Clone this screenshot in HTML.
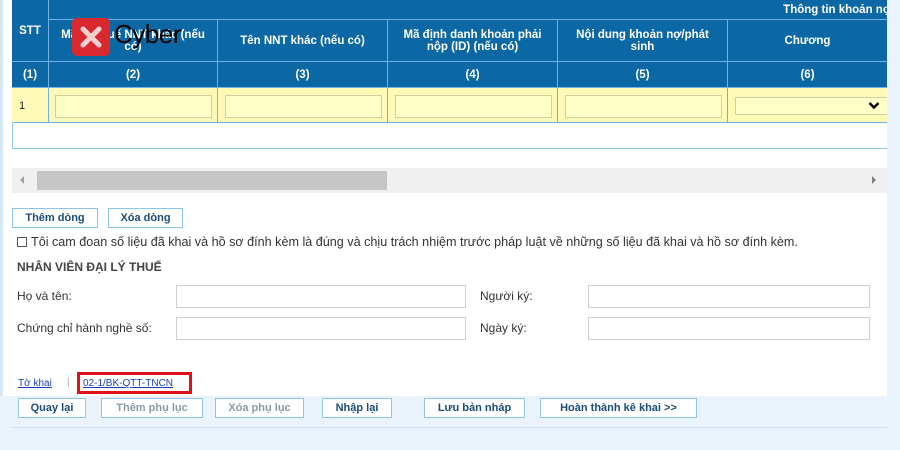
<!DOCTYPE html>
<html><head><meta charset="utf-8"><style>
*{box-sizing:border-box;margin:0;padding:0}
body{width:900px;height:450px;overflow:hidden;background:#eaf3fb;font-family:"Liberation Sans",Arial,sans-serif;position:relative;font-size:12px;color:#222}
.main{position:absolute;left:3px;top:0;width:884px;height:396px;background:#fff}
.abs{position:absolute}
.hd{position:absolute;background:#0c68a4;color:#fff;font-weight:bold;font-size:11.5px;display:flex;align-items:center;justify-content:center;text-align:center;border-right:1px solid #6fb0e6;border-bottom:1px solid #6fb0e6;line-height:12px;overflow:hidden;white-space:nowrap}
.cell{position:absolute;background:#fff9b8;border-right:1px solid #6fb0e6;border-bottom:1px solid #6fb0e6}
.inp{position:absolute;background:#ffffc8;border:1px solid #cfcfa0}
.btn{position:absolute;height:20px;border:1px solid #8cc4ee;background:#fff;color:#1a4c7a;font-weight:bold;font-size:11px;display:flex;align-items:center;justify-content:center}
.btn.g{color:#8a9aa8}
.lbl{position:absolute;font-size:12px;color:#333}
.fi{position:absolute;height:23px;border:1px solid #cfcfcf;background:#fff}
</style></head><body>
<div class="abs" style="left:0;top:0;width:3px;height:396px;background:#d6e8f7"></div>
<div class="main"></div>
<div class="hd" style="left:12px;top:0;width:37px;height:62px">STT</div>
<div class="hd" style="left:49px;top:0;width:838px;height:20px;justify-content:flex-end;padding-right:0;border-right:none"><span style="margin-right:-4px">Thông tin khoản nợ</span></div>
<div class="hd" style="left:49px;top:20px;width:169px;height:42px;white-space:normal">Mã số thuế NNT khác (nếu<br>có)</div>
<div class="hd" style="left:218px;top:20px;width:170px;height:42px">Tên NNT khác (nếu có)</div>
<div class="hd" style="left:388px;top:20px;width:170px;height:42px">Mã định danh khoản phải<br>nộp (ID) (nếu có)</div>
<div class="hd" style="left:558px;top:20px;width:170px;height:42px">Nội dung khoản nợ/phát<br>sinh</div>
<div class="hd" style="left:728px;top:20px;width:159px;height:42px;border-right:none">Chương</div>
<div class="hd" style="left:12px;top:62px;width:37px;height:26px">(1)</div>
<div class="hd" style="left:49px;top:62px;width:169px;height:26px">(2)</div>
<div class="hd" style="left:218px;top:62px;width:170px;height:26px">(3)</div>
<div class="hd" style="left:388px;top:62px;width:170px;height:26px">(4)</div>
<div class="hd" style="left:558px;top:62px;width:170px;height:26px">(5)</div>
<div class="hd" style="left:728px;top:62px;width:159px;height:26px;border-right:none">(6)</div>
<div class="cell" style="left:12px;top:88px;width:37px;height:35px;font-size:11px;padding:13px 0 0 7px;line-height:1">1</div>
<div class="cell" style="left:49px;top:88px;width:169px;height:35px"></div>
<div class="cell" style="left:218px;top:88px;width:170px;height:35px"></div>
<div class="cell" style="left:388px;top:88px;width:170px;height:35px"></div>
<div class="cell" style="left:558px;top:88px;width:170px;height:35px"></div>
<div class="cell" style="left:728px;top:88px;width:159px;height:35px;border-right:none"></div>
<div class="inp" style="left:55px;top:95px;width:157px;height:23px"></div>
<div class="inp" style="left:225px;top:95px;width:157px;height:23px"></div>
<div class="inp" style="left:395px;top:95px;width:157px;height:23px"></div>
<div class="inp" style="left:565px;top:95px;width:157px;height:23px"></div>
<div class="inp" style="left:735px;top:97px;width:152px;height:18px;border-right:none"></div>
<svg class="abs" style="left:868px;top:101px" width="12" height="9" viewBox="0 0 12 9"><path d="M1.5 2 L6 6.5 L10.5 2" stroke="#000" stroke-width="2.4" fill="none"/></svg>
<div class="abs" style="left:12px;top:122px;width:875px;height:27px;border-left:1px solid #8cc4ee;border-bottom:1px solid #8cc4ee"></div>
<div class="abs" style="left:72px;top:18px;width:38px;height:38px;background:#d9292f;border-radius:5px"></div>
<svg class="abs" style="left:72px;top:18px" width="38" height="38" viewBox="0 0 38 38"><path d="M11 11 L27 27 M27 11 L11 27" stroke="#f6d0d0" stroke-width="5" stroke-linecap="round"/></svg>
<div class="abs" style="left:114px;top:19px;font-size:26px;color:#000;letter-spacing:-0.5px">Cyber</div>
<div class="abs" style="left:12px;top:168px;width:875px;height:25px;background:#f0f0f0"></div>
<div class="abs" style="left:37px;top:171px;width:350px;height:19px;background:#c6c6c6"></div>
<div class="abs" style="left:20px;top:176px;width:0;height:0;border-top:4px solid transparent;border-bottom:4px solid transparent;border-right:4px solid #a0a0a0"></div>
<div class="abs" style="left:872px;top:176px;width:0;height:0;border-top:4px solid transparent;border-bottom:4px solid transparent;border-left:4px solid #808080"></div>
<div class="btn" style="left:12px;top:208px;width:86px">Thêm dòng</div>
<div class="btn" style="left:108px;top:208px;width:75px">Xóa dòng</div>
<div class="abs" style="left:17px;top:237px;width:10px;height:10px;border:1px solid #555"></div>
<div class="lbl" style="left:31px;top:235px;font-size:12.6px">Tôi cam đoan số liệu đã khai và hồ sơ đính kèm là đúng và chịu trách nhiệm trước pháp luật về những số liệu đã khai và hồ sơ đính kèm.</div>
<div class="lbl" style="left:17px;top:260px;font-weight:bold;color:#444">NHÂN VIÊN ĐẠI LÝ THUẾ</div>
<div class="lbl" style="left:17px;top:289px">Họ và tên:</div>
<div class="lbl" style="left:17px;top:321px">Chứng chỉ hành nghề số:</div>
<div class="fi" style="left:176px;top:285px;width:290px"></div>
<div class="fi" style="left:176px;top:317px;width:290px"></div>
<div class="lbl" style="left:480px;top:289px">Người ký:</div>
<div class="lbl" style="left:480px;top:321px">Ngày ký:</div>
<div class="fi" style="left:588px;top:285px;width:282px"></div>
<div class="fi" style="left:588px;top:317px;width:282px"></div>
<div class="abs" style="left:18px;top:378px;font-size:10px;color:#1a3cbf;text-decoration:underline">Tờ khai</div>
<div class="abs" style="left:67px;top:377px;font-size:10px;color:#aaa">|</div>
<div class="abs" style="left:77px;top:372px;width:115px;height:22px;border:3px solid #e0101a"></div>
<div class="abs" style="left:83px;top:378px;font-size:10px;color:#1a3cbf;text-decoration:underline">02-1/BK-QTT-TNCN</div>
<div class="btn" style="left:18px;top:398px;width:68px;height:20px">Quay lại</div>
<div class="btn g" style="left:101px;top:398px;width:102px;height:20px">Thêm phụ lục</div>
<div class="btn g" style="left:215px;top:398px;width:89px;height:20px">Xóa phụ lục</div>
<div class="btn" style="left:322px;top:398px;width:70px;height:20px">Nhập lại</div>
<div class="btn" style="left:424px;top:398px;width:101px;height:20px">Lưu bản nháp</div>
<div class="btn" style="left:540px;top:398px;width:157px;height:20px">Hoàn thành kê khai &gt;&gt;</div>
<div class="abs" style="left:10px;top:427px;width:877px;height:1px;background:#d2e4f3"></div>
</body></html>
